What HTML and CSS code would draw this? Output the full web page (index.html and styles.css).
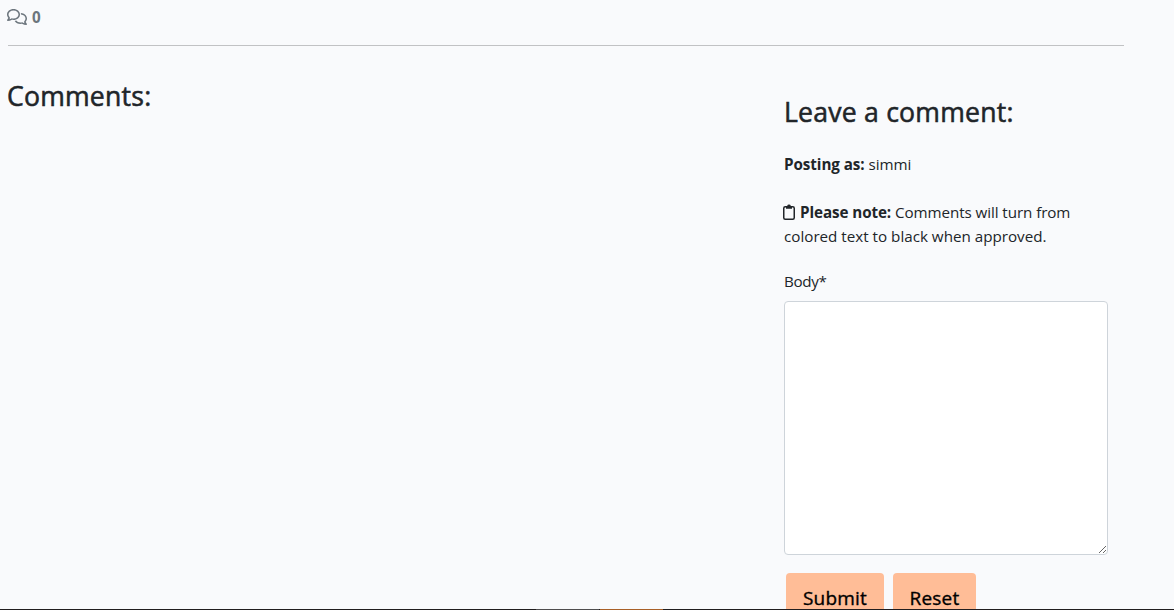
FILE: index.html
```html
<!DOCTYPE html>
<html lang="en">
<head>
<meta charset="utf-8">
<title>Comments</title>
<link rel="stylesheet" href="styles.css">
</head>
<body>
<main class="page">
  <div class="comment-count">
    <svg class="icon-comments" viewBox="0 0 640 512" fill="currentColor"><path d="M88.2 309.1c9.8-18.3 6.8-40.8-7.5-55.8C59.4 230.9 48 204 48 176c0-63.5 63.8-128 160-128s160 64.5 160 128s-63.8 128-160 128c-13.1 0-25.8-1.3-37.8-3.6c-10.4-2-21.2-.6-30.7 4.2c-4.1 2.1-8.3 4.1-12.6 6c-16 7.2-32.9 13.5-49.9 18c2.8-4.6 5.4-9.1 7.9-13.6c1.1-1.9 2.2-3.9 3.2-5.9zM208 352c114.9 0 208-78.8 208-176S322.9 0 208 0S0 78.8 0 176c0 41.8 17.2 80.1 45.9 110.3c-.9 1.7-1.9 3.5-2.8 5.1c-10.3 18.4-22.3 36.5-36.6 52.1c-6.6 7-8.3 17.2-4.6 25.9C5.8 378.3 14.4 384 24 384c43 0 86.5-13.3 122.7-29.7c4.8-2.2 9.6-4.5 14.2-6.8c15.1 3 30.9 4.5 47.1 4.5zM432 480c16.2 0 31.9-1.6 47.1-4.5c4.6 2.3 9.4 4.6 14.2 6.8C529.5 498.7 573 512 616 512c9.6 0 18.2-5.7 22-14.5c3.8-8.8 2-19-4.6-25.9c-14.2-15.6-26.2-33.7-36.6-52.1c-.9-1.7-1.9-3.4-2.8-5.1C622.8 384.1 640 345.8 640 304c0-94.4-87.9-171.5-198.2-175.8c4.1 15.2 6.2 31.2 6.2 47.8l0 .6c87.2 6.7 144 67.5 144 127.4c0 28-11.4 54.9-32.7 77.2c-14.3 15-17.3 37.6-7.5 55.8c1.1 2 2.2 4 3.2 5.9c2.5 4.5 5.2 9 7.9 13.6c-17-4.5-33.9-10.7-49.9-18c-4.3-1.9-8.5-3.9-12.6-6c-9.5-4.8-20.3-6.2-30.7-4.2c-12.1 2.4-24.8 3.6-37.8 3.6c-61.7 0-110-26.5-136.8-62.3c-16 5.4-32.8 9.4-50 11.8C279 439.8 350 480 432 480z"/></svg>
    <strong>0</strong>
  </div>
  <hr class="divider">
  <div class="columns">
    <section class="comments">
      <h3 class="heading">Comments:</h3>
    </section>
    <section class="leave">
      <h3 class="heading heading-leave">Leave a comment:</h3>
      <p class="posting"><strong>Posting as:</strong> simmi</p>
      <p class="note"><svg class="icon-clipboard" viewBox="0 0 12 16" fill="none" stroke="currentColor" stroke-width="1.5"><path d="M3.5 2.75H2.2A1.45 1.45 0 0 0 .75 4.2v9.6a1.45 1.45 0 0 0 1.45 1.45h7.6a1.45 1.45 0 0 0 1.45-1.45V4.2A1.45 1.45 0 0 0 9.8 2.75H8.5"/><path d="M3 2h1.1a2 2 0 0 1 3.8 0H9v2.7H3z" fill="currentColor" stroke="none"/></svg><strong>Please note:</strong> Comments will turn from<br><span class="note-end">colored text to black when approved.</span></p>
      <form>
        <label class="label" for="body">Body*</label>
        <textarea class="field" id="body"></textarea>
        <div class="actions">
          <button class="btn btn-submit" type="button">Submit</button>
          <button class="btn btn-reset" type="button">Reset</button>
        </div>
      </form>
    </section>
  </div>
</main>
<div class="edge"><span class="edge-gray"></span><span class="edge-orange"></span></div>
</body>
</html>
```
FILE: styles.css
```css
* { box-sizing: border-box; }
html, body { height: 610px; overflow: hidden; }
body {
  margin: 0;
  background: #f9fafc;
  color: #212529;
  font: 400 15.2px/24px "Open Sans", "Noto Sans", sans-serif;
}
strong { font-weight: 700; }
.page { width: 1124px; padding: 5px 0 0 7px; }
.comment-count { display: flex; align-items: center; height: 24px; gap: 5px; color: #6c757d; }
.icon-comments { width: 20px; height: 16px; }
.divider { height: 1px; margin: 16px 0 0 1px; border: 0; background: #c1c2c4; }
.columns { display: flex; justify-content: space-between; }
.comments { padding-top: 33px; }
.leave { width: 340px; padding: 49px 16px 0 0; }
.heading { margin: 0; font-size: 26.6px; line-height: 34px; font-weight: 500; letter-spacing: 0.22px; white-space: nowrap; -webkit-text-stroke: 0.55px currentColor; }
.posting { margin: 23px 0 0; letter-spacing: -0.06px; }
.note { margin: 24px 0 0; letter-spacing: -0.08px; white-space: nowrap; }
.note-end { letter-spacing: 0; }
.icon-clipboard { width: 12px; height: 16px; margin: 0 5px 0 -1px; vertical-align: -2px; }
.label { display: block; margin: 21px 0 8px; letter-spacing: -0.35px; }
.field { display: block; width: 324px; height: 254px; border: 1px solid #ced4da; border-radius: 4px; background: #fff; resize: vertical; }
.actions { display: flex; gap: 9px; padding: 18px 0 0 2px; }
.btn { height: 48px; padding: 2px 0 0; border: 0; border-radius: 4px; background: #ffbd97; color: #000; font: 500 19px/30px "Open Sans", "Noto Sans", sans-serif; letter-spacing: 0.2px; -webkit-text-stroke: 0.35px currentColor; }
.btn-submit { width: 98px; }
.btn-reset { width: 83px; }
.edge { position: absolute; left: 0; top: 609px; width: 1174px; height: 1px; padding-left: 536px; display: flex; gap: 1px; background: #211d1e; }
.edge-gray { width: 63px; background: #4f4d4e; }
.edge-orange { width: 63px; background: #a85f27; }
```
